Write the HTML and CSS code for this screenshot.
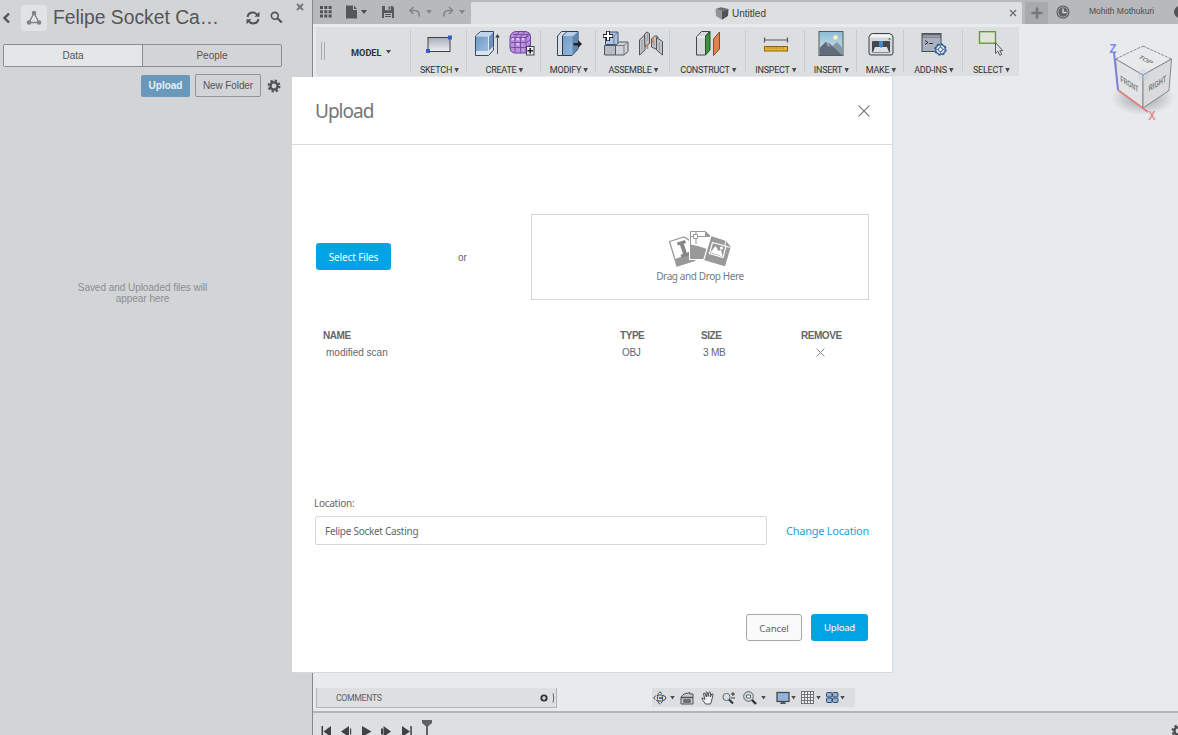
FILE: index.html
```html
<!DOCTYPE html>
<html lang="en">
<head>
<meta charset="utf-8">
<title>Upload</title>
<link rel="stylesheet" href="styles.css">
</head>
<body>
<svg class="defs" width="0" height="0">
  <defs>
    <linearGradient id="steel" x1="0" y1="0" x2="0" y2="1"><stop offset="0" stop-color="#a5acb9"/><stop offset="1" stop-color="#eef0f3"/></linearGradient>
    <linearGradient id="blue" x1="0" y1="0" x2="1" y2="1"><stop offset="0" stop-color="#6f9ac7"/><stop offset="1" stop-color="#9dbbdc"/></linearGradient>
    <linearGradient id="sky" x1="0" y1="0" x2="0" y2="1"><stop offset="0" stop-color="#8ebcd6"/><stop offset="1" stop-color="#d5e6ec"/></linearGradient>
    <symbol id="gear" viewBox="0 0 14 14"><circle cx="7" cy="7" r="3.600" fill="none" stroke="currentColor" stroke-width="2.400"/><circle cx="7" cy="7" r="5.500" fill="none" stroke="currentColor" stroke-width="2" stroke-dasharray="2.300 2.020"/></symbol>
  </defs>
</svg>
<div class="app">
  <aside class="sidebar">
    <div class="side-head">
      <svg class="back" width="9" height="12" viewBox="0 0 9 12"><path d="M7 1.500 2.500 6 7 10.500" fill="none" stroke="#515355" stroke-width="2.400"/></svg>
      <span class="project-icon"><svg width="16" height="16" viewBox="0 0 16 16"><path d="M8 3 3 12.500h10z" fill="none" stroke="#808284" stroke-width="1.400"/><g fill="#808284"><circle cx="8" cy="3" r="2.200"/><circle cx="3" cy="12.500" r="2.300"/><circle cx="13" cy="12.500" r="2.300"/></g></svg></span>
      <h1>Felipe Socket Ca…</h1>
      <svg class="refresh" width="14" height="14" viewBox="0 0 14 14"><g fill="none" stroke="#505254" stroke-width="2"><path d="M1.500 6C2 3 4.500 1.600 7 1.600c2 0 3.500 1 4.500 2.500"/><path d="M12.500 8c-.5 3-3 4.400-5.500 4.400-2 0-3.500-1-4.500-2.500"/></g><path d="M13.500.8v5H8.500zM.5 13.200v-5h5z" fill="#505254"/></svg>
      <svg class="search" width="13" height="13" viewBox="0 0 13 13"><circle cx="4.800" cy="4.800" r="3.400" fill="none" stroke="#505254" stroke-width="1.600"/><path d="m7.300 7.300 4.500 4.200" stroke="#505254" stroke-width="2.200"/></svg>
      <svg class="side-close" width="8" height="8" viewBox="0 0 8 8"><path d="m1 1 6 6M7 1 1 7" stroke="#77797b" stroke-width="2"/></svg>
    </div>
    <div class="tabs"><span class="tab active">Data</span><span class="tab">People</span></div>
    <div class="side-actions">
      <span class="btn-upload">Upload</span><span class="btn-folder">New Folder</span>
      <svg width="14" height="14" color="#505254"><use href="#gear"/></svg>
    </div>
    <p class="empty">Saved and Uploaded files will<br>appear here</p>
  </aside>

  <main class="main">
    <header class="topbar">
      <div class="quick">
        <svg class="q-grid" width="12" height="12" viewBox="0 0 12 12" fill="#505355"><path d="M0 0h3v3H0zM4.300 0h3v3h-3zM8.600 0h3v3h-3zM0 4.300h3v3H0zM4.300 4.300h3v3h-3zM8.600 4.300h3v3h-3zM0 8.600h3v3H0zM4.300 8.600h3v3h-3zM8.600 8.600h3v3h-3z"/></svg>
        <svg class="q-doc" width="12" height="14" viewBox="0 0 12 14" fill="#55585a"><path d="M0 .5h7V5h4v8.500H0zM8 .5 11 4H8z"/></svg>
        <i class="caret q-c1"></i>
        <svg class="q-save" width="12" height="12" viewBox="0 0 12 12"><path d="M0 0h10.500L12 1.500V12H0z" fill="#55585a"/><path d="M3 0h6v4.300H3zM2 7h8v5H2z" fill="#b7babc"/><path d="M6.500.5h1.700v3H6.500zM3 8h6v1H3zM3 10h6v1H3z" fill="#55585a"/></svg>
        <svg class="q-undo" width="12" height="12" viewBox="0 0 12 12"><path d="M1 4.500h5c3 0 4.500 2 4 6M4.500 1 1 4.500 4.500 8" fill="none" stroke="#85888a" stroke-width="1.700"/></svg>
        <i class="caret dim q-c2"></i>
        <svg class="q-redo" width="12" height="12" viewBox="0 0 12 12"><path d="M10.500 4.500H6c-3 0-4.500 2-4 6M7 1l3.500 3.500L7 8" fill="none" stroke="#85888a" stroke-width="1.700"/></svg>
        <i class="caret dim q-c3"></i>
      </div>
      <div class="doc-tab">
        <span class="doc-title"><svg width="14" height="13" viewBox="0 0 14 13"><path d="M.5 2 6 .3 13.500 2 7 4z" fill="#6a6c6e"/><path d="M.5 2 7 4v8.700L1 9z" fill="#929496"/><path d="M7 4l6.500-2-.5 7-6 3.700z" fill="#505254"/></svg>Untitled</span>
        <svg width="8" height="8" viewBox="0 0 8 8"><path d="m1 1 6 6M7 1 1 7" stroke="#6a6c6e" stroke-width="1.300"/></svg>
      </div>
      <div class="plus"><svg width="12" height="12" viewBox="0 0 12 12"><path d="M6 .5v11M.5 6h11" stroke="#77797b" stroke-width="2.700"/></svg></div>
      <svg class="clock" width="14" height="14" viewBox="0 0 14 14"><circle cx="7" cy="7" r="6" fill="#b7babc" stroke="#5b5d5f" stroke-width="1.100"/><circle cx="7" cy="7" r="4.700" fill="#606264"/><path d="M7 3.500V7.500h3.500" fill="none" stroke="#d5d7d8" stroke-width="1.400"/></svg>
      <span class="user">Mohith Mothukuri</span>
      <i class="help"></i>
    </header>

    <nav class="toolbar">
      <div class="group model"><i class="grip"></i><span>MODEL</span><i class="caret"></i></div>
      <div class="group"><div class="icons"><svg width="26" height="27" viewBox="0 0 26 27"><rect x="2" y="7.500" width="22" height="14" fill="url(#steel)" stroke="#404346"/><path d="M22 5.500h4v4h-4zM0 19h4v4H0z" fill="#2c63c4"/></svg></div><span class="label">SKETCH<i class="caret"></i></span></div>
      <div class="group"><div class="icons">
        <svg width="26" height="27" viewBox="0 0 26 27"><path d="m1.500 6 5-4.500h13V20l-5 5.500h-13z" fill="#dce3ea" stroke="#344a66"/><path d="M2 6.500h12V21H2z" fill="url(#blue)"/><path d="m2 6 5-4h12l-4.500 4z" fill="#bfd5eb"/><path d="M15 6.500 19 2.500V17l-4 4z" fill="#6f91b8"/><path d="M14.500 6v19M2 21.500h12.500l5-4.500" stroke="#d9e5f0" fill="none"/><path d="M23.500 5v19" stroke="#55585a"/><path d="M21.200 7.500 23.500 4l2.300 3.500z" fill="#3b3e40"/></svg>
        <svg width="26" height="27" viewBox="0 0 26 27"><path d="M1 7Q2 2 7 1.500h10q4 1 4.500 4V18q0 4-4 5H5q-4-1-4-5z" fill="#ba91dc" stroke="#6d449a"/><path d="M2 7.500h15l4-3M2 12.500h15.500l4-3M2 17.500h15.500l4-3M6 7v15.500M11.500 7v16M17 7v16M6 7l4-5M11.500 7l4-5M17 7l3.500-4M4 4.500h15" fill="none" stroke="#7146a0" stroke-width=".9"/><path d="M3 9h2M7.500 9H10M13 9h2M7.500 14H10" stroke="#f0d8ff" stroke-width="1.500"/><rect x="17.500" y="16.500" width="7.500" height="8.500" fill="#eee" stroke="#444"/><path d="M21.200 18v5.500M18.500 20.700h5.500" stroke="#222" stroke-width="1.600"/></svg>
      </div><span class="label">CREATE<i class="caret"></i></span></div>
      <div class="group"><div class="icons"><svg width="26" height="27" viewBox="0 0 26 27"><path d="m1.500 6 4-4.500h6l-4 4V25.500h-6z" fill="#dadfe7" stroke="#394553"/><path d="m6.500 6 4.500-4.500h11V19l-6 6.500H6.500z" fill="url(#blue)" stroke="#283d58"/><path d="m7 6 4-4h10.500l-5 4z" fill="#bad1e8"/><path d="M16.500 7 21.500 2.500V19l-5 5z" fill="#6187b3"/><path d="M17.500 13h4.500V10l4 4-4 4v-2.500h-4.500z" fill="#222426"/></svg></div><span class="label">MODIFY<i class="caret"></i></span></div>
      <div class="group"><div class="icons">
        <svg width="26" height="27" viewBox="0 0 26 27"><path d="m2.500 5 4-3h8.500v12.500h-12.500z" fill="#a9c6e8" stroke="#41536d"/><path d="m1.500 15.500h11V25h-11z" fill="#b7bbc4" stroke="#505661"/><path d="m12.500 15.500 4-3.500h8.500v9.500L21 25h-8.500z" fill="#cfd2d8" stroke="#505661"/><path d="M13 15.500h8L25 12M21 15.500V25M11 6l3.500-3.500M11 6v9" fill="none" stroke="#747a85"/><path d="M5 1v10M0 6h10" stroke="#222" stroke-width="4"/><path d="M5 1.700v8.600M.7 6h8.600" stroke="#fff" stroke-width="2"/></svg>
        <svg width="26" height="27" viewBox="0 0 26 27"><g fill="#c1c5ca" stroke="#4e5358"><path d="m1.500 10 5.500-5.500V20l-5.500 5z"/><path d="M6.500 4.500Q9 0 11.500 4v9.500L7 17z"/><path d="m13.500 9 3-3q3-1 3.500 1.500V20l-6.500-3z"/><path d="m18.500 7.500 6 4V25l-6-5z"/></g><path d="M9.500 14v5M15 8v5" stroke="#e9792e" stroke-width="1.500"/><path d="M4 10v11M9.500 4v7M16 11v5M21.500 12v9" stroke="#9ba1a8" stroke-width="1.300"/></svg>
      </div><span class="label">ASSEMBLE<i class="caret"></i></span></div>
      <div class="group"><div class="icons"><svg width="26" height="27" viewBox="0 0 26 27"><path d="m1.500 7 5-5.500h8L10.500 6v19h-9z" fill="#d6d9dd" stroke="#44484c"/><path d="m10.500 6.500 4.500-5V20l-4.500 5z" fill="#3f9242" stroke="#235527"/><path d="m2 7h8" stroke="#fff"/><path d="m18.500 9 6-7v17l-6 6.500z" fill="#de8350" stroke="#8d4826"/></svg></div><span class="label">CONSTRUCT<i class="caret"></i></span></div>
      <div class="group"><div class="icons"><svg width="26" height="27" viewBox="0 0 26 27"><path d="M1.500 10h23M1.500 7.500v5M24.500 7.500v5" stroke="#54575a" stroke-width="1.200"/><rect x="1.500" y="16.500" width="23" height="4.500" fill="#e8b92d" stroke="#93600f"/><path d="M5 17v2M8 17v2M11 17v2M14 17v2M17 17v2M20 17v2" stroke="#a67b1a"/></svg></div><span class="label">INSPECT<i class="caret"></i></span></div>
      <div class="group"><div class="icons"><svg width="26" height="27" viewBox="0 0 26 27"><rect x="1" y="1.500" width="24" height="24" fill="url(#sky)" stroke="#555b61"/><circle cx="17.500" cy="7.500" r="2.300" fill="#fff1bd"/><path d="m10 20 9-8 6 6v7H10z" fill="#8798a5"/><path d="m1.500 18 6-6 4 1.500L24 25H1.500z" fill="#606c7c"/><path d="m8 12 1.500 4 3 1-2-3.500z" fill="#9ba5b0"/></svg></div><span class="label">INSERT<i class="caret"></i></span></div>
      <div class="group"><div class="icons"><svg width="26" height="27" viewBox="0 0 26 27"><path d="M1 7q.5-3 3.500-3.500h17Q24.500 4 25 7v16q0 2-2 2H3q-2 0-2-2z" fill="#d4d7da" stroke="#3c4043"/><path d="M2 7.500q1-3 3-3h16q2 0 3 3z" fill="#f2f3f4"/><rect x="4" y="11" width="18" height="11.500" rx="1" fill="#45494d"/><path d="M7 17h12l2 5H5z" fill="#dce1e6"/><path d="M11 11h4v5l-2 2-2-2z" fill="#4388ce"/><circle cx="21.500" cy="9" r="1" fill="#17ab39"/></svg></div><span class="label">MAKE<i class="caret"></i></span></div>
      <div class="group"><div class="icons"><svg width="26" height="27" viewBox="0 0 26 27"><rect x="1" y="3.500" width="19" height="18" fill="#a9b0bf" stroke="#474c54"/><path d="M1 3.500h19v4H1z" fill="#596069"/><path d="M2 6h17" stroke="#d2d5d9"/><path d="m4 10.500 3 2-3 2" fill="none" stroke="#303438"/><path d="M8 13.500h4" stroke="#303438"/><circle cx="19.500" cy="19.500" r="5" fill="#c9dcf0" stroke="#3a5c87" stroke-width="1.300"/><circle cx="19.500" cy="19.500" r="5.500" fill="none" stroke="#3a5c87" stroke-width="1.500" stroke-dasharray="2 2.300"/><circle cx="19.500" cy="19.500" r="2" fill="#fff" stroke="#3a5c87"/><path d="M19.500 14v3.500M19.500 21.500V25M14 19.500h3.500M21.500 19.500H25" stroke="#5d7fa9"/></svg></div><span class="label">ADD-INS<i class="caret"></i></span></div>
      <div class="group"><div class="icons"><svg width="26" height="27" viewBox="0 0 26 27"><rect x="1.500" y="1.700" width="16" height="11.500" fill="#dfe5d7" stroke="#5b9a1c" stroke-width="1.300"/><path d="M17.500 12.500v11l2.300-2.200 2 4 2-1-2-3.600h3z" fill="#dcdee0" stroke="#4a4c4e" stroke-width=".9"/></svg></div><span class="label">SELECT<i class="caret"></i></span></div>
    </nav>

    <section class="canvas">
      <svg class="cube" width="78" height="95" viewBox="1100 33 78 95">
        <defs><radialGradient id="shade"><stop offset="0" stop-color="#8b8e91" stop-opacity=".8"/><stop offset="1" stop-color="#8b8e91" stop-opacity="0"/></radialGradient></defs>
        <ellipse cx="1143" cy="98" rx="32" ry="17" fill="url(#shade)"/>
        <g stroke="#707376" stroke-width=".8"><path d="m1143 46 28.500 13-28.500 16-27.500-16z" fill="#e8e9eb" stroke-dasharray="3 1"/><path d="m1115.500 59 27.500 16v33l-25-18z" fill="#e2e3e5"/><path d="m1143 75 28.500-16-2.500 31.500-26 17.500z" fill="#d8dadc"/></g>
        <path d="m1143 68 5.500 3.500v7l-5.500 3-5-3v-7z" fill="#b7cbe0" opacity=".3"/>
        <path d="m1114 53 4 37" stroke="#7f82dd" stroke-width="2"/><path d="m1118 90 30 22" stroke="#dc8284" stroke-width="2"/>
        <g font-family="Liberation Sans, sans-serif" fill="#7c7f82" text-anchor="middle" font-size="8.500" font-weight="bold">
          <text transform="matrix(.75 .38 -.6 .42 1144 61)">TOP</text>
          <text transform="matrix(.62 .37 .05 1.050 1129.500 87)">FRONT</text>
          <text transform="matrix(.66 -.4 .02 1.050 1157.500 86.500)">RIGHT</text>
          <text x="1113" y="52.500" font-size="13" fill="#8285e4" textLength="7" lengthAdjust="spacingAndGlyphs">Z</text>
          <text x="1152" y="120" font-size="12" fill="#e58a8b" textLength="7" lengthAdjust="spacingAndGlyphs">X</text>
        </g>
      </svg>
      <div class="bottom-row">
        <div class="comments"><span>COMMENTS</span><svg width="15" height="10" viewBox="0 0 15 10"><circle cx="4" cy="5" r="3.600" fill="#303234"/><path d="M4 3v4M2 5h4" stroke="#fff" stroke-width="1.200"/><path d="M13 .5q1.500 4.500 0 9" fill="none" stroke="#606264"/></svg></div>
        <div class="navbar">
          <svg width="14" height="14" viewBox="0 0 14 14"><g fill="none" stroke="#44484c" stroke-dasharray="5 1"><ellipse cx="7" cy="7" rx="6" ry="3"/><ellipse cx="7" cy="7" rx="2.500" ry="6"/></g><path d="M6 7h3" stroke="#3478d0" stroke-width="2"/></svg><i class="caret n1"></i>
          <svg class="n2" width="14" height="14" viewBox="0 0 14 14"><path d="m1 6 3-3 6-1.500L9.500 3H13v10H1z" fill="#c8cbce" stroke="#505458"/><path d="M1 6.500h12M4 9h6v2H4z" fill="none" stroke="#505458" stroke-width="1.300"/></svg>
          <svg class="n3" width="14" height="14" viewBox="0 0 14 14"><path d="M4.500 13 1 8q-.5-1.500 1-1L4 8.500 2.500 3q0-1.300 1.300-.8L5.500 6 5 1.500q.7-1.300 1.500 0l.7 4L8 1.200q1-1 1.500.3L9.300 6l1.500-3q1.500-.7 1.200 1l-1.500 6L9.500 13z" fill="#f1f2f3" stroke="#3c3f42" stroke-width=".9"/></svg>
          <svg class="n4" width="14" height="14" viewBox="0 0 14 14"><circle cx="4.500" cy="6" r="3.600" fill="#d1dfed" stroke="#686c70"/><path d="m7 8.500 4 4" stroke="#34373a" stroke-width="2.200"/><path d="M9 3h4M11 1v4M9 7h4" stroke="#34373a"/></svg>
          <svg class="n5" width="15" height="14" viewBox="0 0 15 14"><circle cx="5.500" cy="5.500" r="4.800" fill="#d7dbe0" stroke="#585c60"/><path d="M3.500 4h4v3h-4z" fill="#fff" stroke="#55677b"/><path d="m9 9 4 4" stroke="#34373a" stroke-width="2.400"/></svg><i class="caret n6"></i>
          <svg class="n7" width="14" height="14" viewBox="0 0 14 14"><rect x="1" y="1.500" width="12" height="9" fill="#91b4dc" stroke="#45494d" stroke-width="1.300"/><path d="M5 11h4l1 2H4z" fill="#54585c"/></svg><i class="caret n8"></i>
          <svg class="n9" width="14" height="14" viewBox="0 0 14 14"><rect x=".5" y=".5" width="12.500" height="12.500" fill="#eee"/><path d="M.5 0v13M3.500 0v13M6.500 0v13M9.500 0v13M12.500 0v13M0 .5h13M0 3.500h13M0 6.500h13M0 9.500h13M0 12.500h13" stroke="#66696d" stroke-width=".9"/></svg><i class="caret n8"></i>
          <svg class="n10" width="13" height="12" viewBox="0 0 13 12"><g fill="#8fb0d9" stroke="#344a6c"><rect x=".5" y=".5" width="5.500" height="4.500" rx="1"/><rect x="6.500" y=".5" width="5.500" height="4.500" rx="1"/><rect x=".5" y="6" width="5.500" height="4.500" rx="1"/><rect x="6.500" y="6" width="5.500" height="4.500" rx="1"/></g></svg><i class="caret n8"></i>
        </div>
      </div>
    </section>

    <footer class="timeline">
      <svg width="112" height="18" viewBox="321 719 112 18" fill="#3f4245"><path d="M321.500 726h1.600v11h-1.600zM331 726v11l-7.500-5.500zM349 726v11l-8-5.500zM350 728.500h1.200v6H350zM362 726l9.500 5.500-9.500 5.500zM383.500 726l7.500 5.500-7.500 5.500zM381 728.500h2v6h-2zM402 726l8 5.500-8 5.500zM410.300 726h1.500v11h-1.500z"/><path d="M422 720h10v3l-4 3.500V737h-2v-10.500l-4-3.500z" fill="#606366"/></svg>
      <svg class="tl-gear" width="14" height="14" color="#484b4d"><use href="#gear"/></svg>
    </footer>
  </main>
</div>

<div class="dialog">
  <div class="dialog-head"><h2>Upload</h2><svg width="12" height="12" viewBox="0 0 12 12"><path d="m.7.7 10.600 10.600M11.300.7.7 11.300" stroke="#6d6f71" stroke-width="1.100"/></svg></div>
  <div class="pick">
    <span class="primary select">Select Files</span>
    <span class="or">or</span>
    <div class="drop">
      <svg width="64" height="38" viewBox="668 230 64 38">
        <path d="m669.500 241.500 14.500-4.500 5 3 6 20-18 6z" fill="#fff" stroke="#999" stroke-width="1.300"/><path d="m675 259 17-6 3 8-18 5.500z" fill="#999"/><path d="m677 242.500 8-2.500 1 3-2.200.7 3 9 2.200-.7 1 3-8.500 2.700-1-3 2.500-.8-3-9-2.200.7z" fill="#888"/>
        <path d="M690.500 231.500h15l5 4.500v22.500h-20z" fill="#fff" stroke="#fff" stroke-width="3"/><path d="M690.500 258.500v-27h15l5 5v22z" fill="#fff" stroke="#999"/><path d="M690.500 244.500 698 246l9 3v9.500h-16.500zM705 231v6h6z" fill="#999"/><path d="M690 236.500h17M696 231v13" stroke="#999"/><path d="M693.500 234.500h4v4h-4z" fill="#fff" stroke="#999"/>
        <path d="m711 235.500 15.500 5 5 6-6 20.500-22-6.500z" fill="#999" stroke="#fff" stroke-width="1.200"/><path d="m712.500 242.500 13.500 3.700-3 11.300-13.500-4z" fill="none" stroke="#fff" stroke-width="1.200"/><path d="m710.500 252.500 5-6.500 3 5 2.500-1.500 1.500 7z" fill="#fff"/><circle cx="721.500" cy="248" r="1.500" fill="#fff"/><path d="m726 241-1.500 5 6 1.500" fill="none" stroke="#fff"/>
      </svg>
      <span>Drag and Drop Here</span>
    </div>
  </div>
  <div class="files">
    <b>NAME</b><b>TYPE</b><b>SIZE</b><b>REMOVE</b>
    <span class="c1">modified scan</span><span class="c2">OBJ</span><span class="c3">3 MB</span>
    <svg width="9" height="9" viewBox="0 0 9 9"><path d="m.6.6 7.800 7.800M8.400.6.6 8.400" stroke="#85878a"/></svg>
  </div>
  <div class="location">
    <label>Location:</label>
    <div class="loc-row"><span class="field">Felipe Socket Casting</span><a>Change Location</a></div>
  </div>
  <div class="buttons"><span class="cancel">Cancel</span><span class="primary">Upload</span></div>
</div>
</body>
</html>
```

FILE: styles.css
```css
* { box-sizing: border-box; }
body { margin: 0; width: 1178px; height: 735px; overflow: hidden; position: relative; font-family: "Liberation Sans", Arial, sans-serif; font-size: 10px; color: #535557; }
svg { display: block; flex: none; }
.defs { position: absolute; }
h1, h2, p { margin: 0; font-weight: normal; }
.app { display: flex; height: 735px; }

.sidebar { width: 312px; flex: none; background: #d3d4d6; }
.side-head { display: flex; height: 44px; align-items: flex-start; }
.back { margin: 12px 0 0 2px; }
.project-icon { display: flex; align-items: center; justify-content: center; width: 26px; height: 26px; margin: 5px 0 0 10px; background: #e0e2e4; border-radius: 3px; }
.side-head h1 { width: 192px; margin-left: 6px; padding-top: 6px; font-size: 19.3px; line-height: 23px; white-space: nowrap; }
.refresh { margin: 11px 0 0 1px; }
.search { margin: 11px 0 0 10px; }
.side-close { margin: 3px 0 0 13px; }
.tabs { display: flex; width: 279px; height: 23px; margin-left: 3px; border: 1px solid #8b8d8f; border-radius: 2px; }
.tab { flex: 1; line-height: 22px; text-align: center; }
.tab.active { background: #e4e6e8; border-right: 1px solid #8b8d8f; }
.side-actions { display: flex; align-items: center; height: 23px; margin: 7px 0 0 141px; }
.btn-upload { width: 49px; height: 22px; line-height: 22px; text-align: center; background: #6898bb; color: #e9f0f5; font-weight: bold; border-radius: 2px; }
.btn-folder { width: 66px; height: 23px; line-height: 22px; margin: 0 6px 0 5px; text-align: center; border: 1px solid #929496; border-radius: 2px; font-size: 10px; letter-spacing: -.1px; }
.empty { width: 285px; margin-top: 185px; text-align: center; font-size: 10px; letter-spacing: -.04px; line-height: 11px; color: #8b8d8f; }

.main { flex: 1; min-width: 0; display: flex; flex-direction: column; background: #e7ebee; border-left: 1px solid #85888a; }
.topbar { display: flex; height: 24px; background: #b7babc; overflow: hidden; }
.quick { display: flex; width: 158px; align-items: center; padding-left: 7px; flex: none; }
.q-doc { margin-left: 14px; }
.q-c1 { margin-left: 3px; }
.q-save { margin-left: 15px; }
.q-undo { margin-left: 15px; }
.q-c2 { margin-left: 5px; }
.q-redo { margin-left: 10px; }
.q-c3 { margin-left: 5px; }
.caret { display: inline-block; flex: none; width: 6px; height: 4px; background: #484a4c; clip-path: polygon(0 0, 100% 0, 50% 100%); }
.caret.dim { background: #85888a; }
.doc-tab { display: flex; align-items: center; width: 551px; height: 22px; margin-top: 2px; padding-right: 5px; background: #dedfe1; border-radius: 2px 2px 0 0; flex: none; }
.doc-title { flex: 1; display: flex; justify-content: center; gap: 3px; align-items: center; padding-left: 1px; color: #3a3c3e; }
.plus { flex: none; width: 23px; height: 22px; margin: 2px 0 0 3px; background: #a8abad; display: flex; align-items: center; justify-content: center; border-radius: 2px 2px 0 0; }
.clock { margin: 5px 0 0 8px; }
.user { flex: none; width: 85px; margin-left: 19px; line-height: 23px; font-size: 8.500px; color: #4a4c4e; white-space: nowrap; }
.help { width: 12px; height: 12px; margin-top: 6px; flex: none; border-radius: 6px; background: #505254; }

.toolbar { display: grid; grid-template-columns: 95px 56px 74px 55px 74px 76px 59px 52px 47px 59px 56px; width: 703px; height: 49px; margin: 3px 0 0 3px; background: #dddee0; font-family: Roboto, sans-serif; font-size: 9px; letter-spacing: -.25px; color: #303234; }
.group { display: flex; flex-direction: column; align-items: center; padding-top: 3px; background: linear-gradient(#c9cbcd, #c9cbcd) right 3px / 1px 42px no-repeat; }
.group:last-child { background: none; }
.icons { display: flex; gap: 9px; height: 27px; }
.label { display: flex; align-items: center; gap: 2px; height: 12px; margin-top: 7px; padding-left: 1px; white-space: nowrap; }
.label .caret { width: 5px; height: 5px; }
.model { flex-direction: row; padding: 0 0 0 5px; font-weight: bold; font-size: 9.2px; letter-spacing: 0; }
.model span { margin: 1px 4px 0 26px; }
.grip { width: 4px; height: 18px; margin-top: -1px; border: solid #a9acae; border-width: 0 1px; }

.canvas { flex: 1; position: relative; display: flex; align-items: flex-end; }
.cube { position: absolute; right: 0; top: -43px; }
.bottom-row { display: flex; padding: 0 0 3px 3px; align-items: flex-start; }
.comments { display: flex; justify-content: space-between; align-items: center; width: 241px; height: 20px; padding: 0 1px 0 19px; background: #dedfe0; border: solid #b1b5b8; border-width: 0 1px 1px; font-family: Roboto, sans-serif; font-size: 8.700px; letter-spacing: -.3px; color: #606264; }
.navbar { display: flex; align-items: center; width: 203px; height: 19px; margin-left: 95px; padding-left: 1px; background: #dddee0; }
.navbar .caret { width: 5px; height: 4px; }
.n1 { margin-left: 3px; }
.n2 { margin-left: 5px; }
.n3 { margin-left: 7px; }
.n4 { margin-left: 7px; }
.n5 { margin-left: 7px; }
.n6 { margin-left: 3px; }
.n7 { margin-left: 10px; }
.n8 { margin-left: 1px; }
.n9, .n10 { margin-left: 5px; }
.timeline { display: flex; justify-content: space-between; height: 24px; padding: 6px 0 0 8px; background: #dedfe0; border-top: 2px solid #b0b5ba; overflow: hidden; }
.tl-gear { margin: 5px -7px 0 0; }

.dialog { position: absolute; left: 292px; top: 77px; width: 601px; height: 596px; display: flex; flex-direction: column; background: #fff; border: solid #d6d8da; border-width: 0 1px 1px 0; font-family: "Noto Sans", sans-serif; color: #646668; }
.dialog-head { display: flex; justify-content: space-between; align-items: center; height: 68px; padding: 0 22px 0 23px; border-bottom: 1px solid #d9dadc; }
.dialog-head h2 { font-size: 19px; font-weight: 400; letter-spacing: -1px; color: #737577; }
.pick { display: flex; align-items: center; height: 86px; margin: 69px 23px 0 24px; }
.primary { display: block; flex: none; width: 57px; height: 27px; line-height: 28px; text-align: center; border-radius: 3px; background: #00a4e4; color: #fff; font-size: 9.600px; letter-spacing: -.25px; }
.select { width: 75px; margin-bottom: 1px; font-size: 10px; letter-spacing: -.13px; }
.or { margin: 0 64px 0 67px; width: 9px; font-family: "Liberation Sans", sans-serif; }
.drop { display: flex; flex-direction: column; align-items: center; flex: none; width: 338px; height: 86px; padding-top: 15px; border: 1px solid #d5d7d8; }
.drop span { margin-top: 2px; line-height: 13px; font-size: 10px; letter-spacing: -.4px; color: #77797b; }
.files { display: grid; grid-template-columns: 297px 81px 100px 60px; grid-template-rows: 16px 18px; align-items: center; margin: 27px 0 0 31px; font-family: "Liberation Sans", sans-serif; }
.files b { font-size: 10px; letter-spacing: -.45px; }
.c1 { padding-left: 3px; }
.c2 { padding-left: 2px; letter-spacing: -.3px; }
.c3 { padding-left: 2px; letter-spacing: -.2px; }
.files svg { margin-left: 15px; }
.location { margin: 135px 23px 0 22px; font-size: 10px; letter-spacing: -.28px; }
.location label { display: block; line-height: 14px; }
.loc-row { display: flex; align-items: center; justify-content: space-between; margin: 6px 0 0 1px; }
.field { width: 452px; height: 29px; line-height: 29px; padding-left: 9px; border: 1px solid #d5d7d8; border-radius: 2px; }
.loc-row a { font-size: 11px; letter-spacing: -.25px; color: #16a5dd; white-space: nowrap; }
.buttons { display: flex; justify-content: flex-end; gap: 9px; margin: 69px 24px 0 0; }
.cancel { width: 56px; height: 27px; line-height: 27px; text-align: center; border: 1px solid #a5a7a9; border-radius: 3px; background: #fafafa; font-size: 9.800px; letter-spacing: -.2px; }
```
